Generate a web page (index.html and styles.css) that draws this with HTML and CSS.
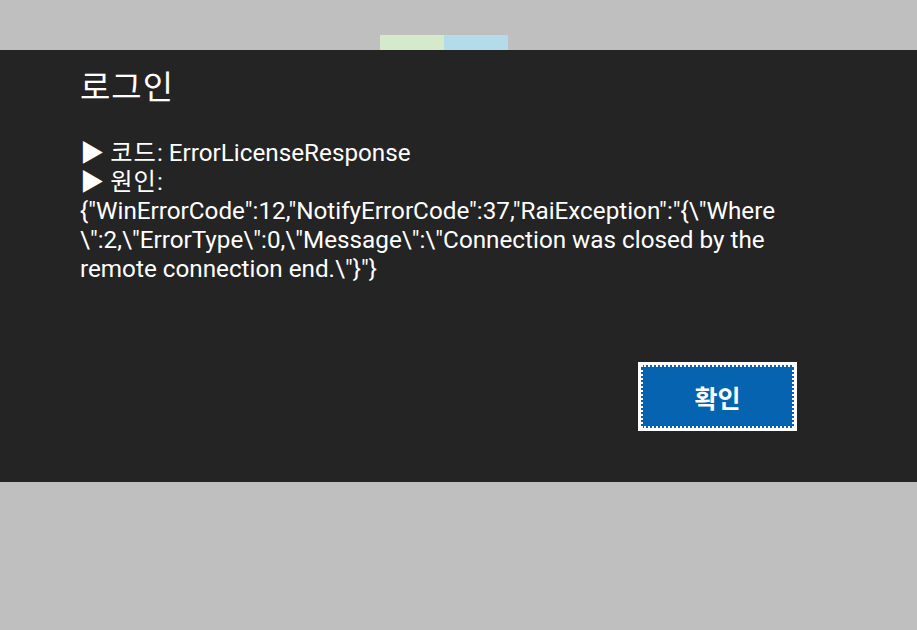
FILE: index.html
```html
<!DOCTYPE html>
<html lang="ko">
<head>
    <meta charset="UTF-8">
    <title>로그인</title>
    <link rel="stylesheet" href="styles.css">
</head>
<body>
    <div class="accent">
        <div class="accent-green"></div>
        <div class="accent-blue"></div>
    </div>
    <div class="dialog">
        <div class="content">
            <h1>로그인</h1>
            <div class="message">
                <div>▶ <span class="ko">코드</span>: ErrorLicenseResponse</div>
                <div>▶ <span class="ko">원인</span>:</div>
                <div class="detail">{"WinErrorCode":12,"NotifyErrorCode":37,"RaiException":"{\"Where<br>\":2,\"ErrorType\":0,\"Message\":\"Connection was closed by the remote connection end.\"}"}</div>
            </div>
            <div class="actions">
                <button class="ok">확인</button>
            </div>
        </div>
    </div>
</body>
</html>
```

FILE: styles.css
```css
* {
    margin: 0;
    padding: 0;
    box-sizing: border-box;
}

body {
    background: #bfbfbf;
    height: 630px;
    font-family: Roboto, "Noto Sans CJK KR", sans-serif;
    color: #fff;
}

.accent {
    display: flex;
    padding: 35px 0 0 380px;
}

.accent-green {
    width: 64px;
    height: 15px;
    background: #d4eaca;
}

.accent-blue {
    width: 64px;
    height: 15px;
    background: #b4dbea;
}

.dialog {
    background: #242424;
    height: 432px;
}

.content {
    width: 797px;
    padding: 19px 0 0 80px;
}

h1 {
    font-size: 33px;
    font-weight: 400;
    letter-spacing: 1px;
    line-height: 38px;
    margin-bottom: 32px;
}

.message {
    font-size: 24.25px;
    line-height: 29px;
}

.ko {
    letter-spacing: 1px;
}

.actions {
    display: flex;
    justify-content: flex-end;
    margin-top: 78px;
}

.ok {
    width: 159px;
    height: 69px;
    background: #0563b0;
    border: 3px solid #fff;
    outline: 2px dotted #fff;
    outline-offset: -5px;
    color: #fff;
    font-family: Roboto, "Noto Sans CJK KR", sans-serif;
    font-size: 25px;
    font-weight: 700;
}
```
